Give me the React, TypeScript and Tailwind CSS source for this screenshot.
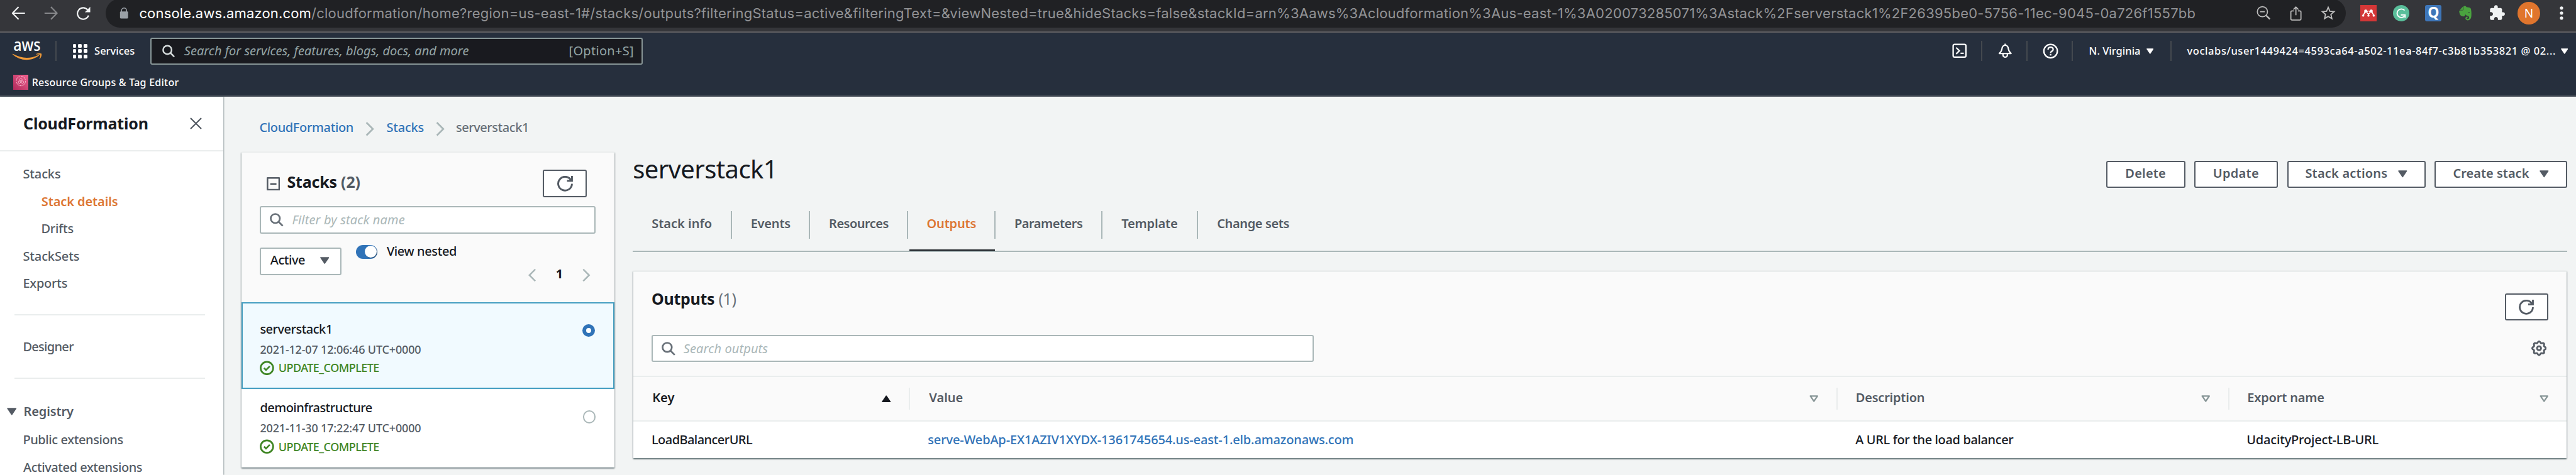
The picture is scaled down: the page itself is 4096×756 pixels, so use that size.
import React from "react";
import type { ReactNode } from "react";
import { FaEvernote } from "react-icons/fa";
import { MdExtension, MdStarBorder } from "react-icons/md";

const gearPath =
  Array.from({ length: 97 }, (_, i) => {
    const a = (i / 96) * Math.PI * 2;
    const r = 6.35 + 0.75 * Math.cos(8 * a);
    return `${i ? "L" : "M"}${(8 + r * Math.sin(a)).toFixed(2)} ${(8 - r * Math.cos(a)).toFixed(2)}`;
  }).join("") + "Z";

function SearchIcon({ className }: { className: string }) {
  return (
    <svg viewBox="0 0 16 16" fill="none" stroke="currentColor" strokeWidth="2" className={className}>
      <circle cx="6.5" cy="6.5" r="5.4" />
      <path d="M10.4 10.4 15.3 15.3" />
    </svg>
  );
}

function RefreshIcon({ className }: { className: string }) {
  return (
    <svg viewBox="0 0 16 16" fill="none" stroke="currentColor" strokeWidth="1.9" className={className}>
      <path d="M10 5h5V0" />
      <path d="M15 8a7 7 0 1 1-.8-3.4" />
    </svg>
  );
}

function Caret({ className, hollow, up }: { className: string; hollow?: boolean; up?: boolean }) {
  return (
    <svg viewBox="0 0 14 11" className={className} stroke="currentColor" strokeWidth={hollow ? 2.2 : 1.6} strokeLinejoin="round" fill={hollow ? "none" : "currentColor"}>
      <path d={up ? "M1 10h12L7 1.2z" : hollow ? "M1.6 1.2h10.8L7 9.2z" : "M1 1h12L7 9.8z"} />
    </svg>
  );
}

function Chevron({ className, left }: { className: string; left?: boolean }) {
  return (
    <svg viewBox="0 0 14 23" className={className} fill="none" stroke="currentColor" strokeWidth="2.8">
      <path d={left ? "M12.5 1 2 11.5 12.5 22" : "M1.5 1 12 11.5 1.5 22"} />
    </svg>
  );
}

function BrowserBar() {
  return (
    <div className="flex h-[51.5px] shrink-0 items-start border-b-2 border-[#5f5f62] bg-[#35363a] pl-[18px] text-[#f1f3f4]">
      <svg viewBox="66 36 84 82" className="mt-[9.6px] h-[22px] w-[22.5px]" fill="none" stroke="currentColor" strokeWidth="8">
        <path d="M147 77H74M109 40 73 77l36 36" strokeLinejoin="round" />
      </svg>
      <svg viewBox="258 36 84 82" className="mt-[9.6px] ml-[29px] h-[22px] w-[22.5px] text-[#87888b]" fill="none" stroke="currentColor" strokeWidth="8">
        <path d="M261 77h73M299 40l36 37-36 36" strokeLinejoin="round" />
      </svg>
      <svg viewBox="450 36 87 84" className="mt-[9.6px] ml-[28.6px] h-[22.5px] w-[23.3px]" fill="none" stroke="currentColor" strokeWidth="8">
        <path d="M524 91A34 34 0 1 1 518 57" />
        <path d="M534 39v32h-32z" fill="currentColor" stroke="none" />
      </svg>
      <div className="-mt-[2px] ml-[24px] flex h-[45.5px] w-[3562.5px] items-center rounded-[23px] bg-[#202124] pl-[21.8px]">
        <svg viewBox="705 46 54 68" className="h-[18.2px] w-[14.5px] text-[#9aa0a6]">
          <path d="M717 72v-8a15 15 0 0 1 30 0v8" fill="none" stroke="currentColor" strokeWidth="6" />
          <rect x="708" y="69" width="48" height="42" rx="5" fill="currentColor" />
        </svg>
        <div className="ml-[17.2px] font-['Inter',sans-serif] text-[22px] leading-[28px] whitespace-nowrap text-[#929396]">
          <span className="tracking-[0.18px] text-white">console.aws.amazon.com</span>
          <span className="tracking-[0.23px]">
            /cloudformation/home?region=us-east-1#/stacks/outputs?filteringStatus=active&amp;filteringText=&amp;viewNested=true&amp;hideStacks=false&amp;stackId=arn%3Aaws%3Acloudformation%3Aus-east-1%3A020073285071%3Astack%2Fserverstack1%2F26395be0-5756-11ec-9045-0a726f1557bb
          </span>
        </div>
        <div className="mr-[14px] ml-auto flex items-center text-[#bdbdbd]">
          <svg viewBox="635 35 85 85" className="h-[22.8px] w-[22.8px]" fill="none" stroke="currentColor" strokeWidth="6.5">
            <circle cx="670" cy="71" r="30" />
            <path d="M656 71h28" />
            <path d="M692 93l22 22" strokeWidth="9" />
          </svg>
          <svg viewBox="834 35 72 90" className="ml-[30px] h-[24.1px] w-[19.3px]" fill="none" stroke="currentColor" strokeWidth="6.5">
            <path d="M858 66H847q-7 0-7 7v40q0 7 7 7h46q7 0 7-7V73q0-7-7-7H882" />
            <path d="M870 92V43M855 58l15-15 15 15" />
          </svg>
          <MdStarBorder className="ml-[28px] h-[28px] w-[28px]" />
        </div>
      </div>
      <svg viewBox="0 0 96 96" className="mt-[8px] ml-[23px] h-[26px] w-[26px]">
        <rect width="96" height="96" fill="#d43737" />
        <g fill="#fff" stroke="#fff">
          <circle cx="32" cy="36" r="9" />
          <circle cx="64" cy="36" r="9" />
          <path d="M17 61 29 38M79 61 67 38M48 62V50" fill="none" strokeWidth="6" />
          <circle cx="48" cy="43" r="8" fill="#d43737" strokeWidth="4" />
          <circle cx="17" cy="62" r="6" />
          <circle cx="79" cy="62" r="6" />
          <circle cx="48" cy="62" r="6" />
        </g>
      </svg>
      <svg viewBox="0 0 96 96" className="mt-[8px] ml-[25.5px] h-[26px] w-[26px]" fill="none" stroke="#fff" strokeWidth="7">
        <circle cx="48" cy="48" r="48" fill="#5abf9b" stroke="none" />
        <path d="M68 32A25 25 0 1 0 67 66" />
        <path d="M46 58h25v17" />
      </svg>
      <div className="mt-[8px] ml-[25.5px] flex h-[26px] w-[26px] items-center justify-center rounded-[3px] bg-[#3e76b8] font-['Noto_Sans',sans-serif] text-[23px] leading-none font-bold text-white">
        <span className="-mt-[3px]">Q</span>
      </div>
      <FaEvernote className="mt-[8px] ml-[24px] h-[26px] w-[28px] text-[#4aa33f]" />
      <MdExtension className="mt-[7px] ml-[22.5px] h-[27px] w-[27px]" />
      <div className="mt-[3px] ml-[19px] flex h-[36px] w-[36px] items-center justify-center rounded-full bg-[#e0752d] font-['Noto_Sans',sans-serif] text-[19px] leading-none text-white">
        N
      </div>
      <svg viewBox="0 0 6 22" className="mt-[10px] ml-[30.7px] h-[22px] w-[6px] fill-current">
        <circle cx="3" cy="2.8" r="2.6" />
        <circle cx="3" cy="10.8" r="2.6" />
        <circle cx="3" cy="18.8" r="2.6" />
      </svg>
    </div>
  );
}

function HeaderCell({ children, className }: { children: ReactNode; className: string }) {
  return <div className={`flex h-[32px] items-center border-[#44494f] ${className}`}>{children}</div>;
}

function AwsHeader() {
  return (
    <header className="flex h-[102.9px] shrink-0 flex-col border-b-2 border-[#545b64] bg-[#262f3d] text-white">
      <div className="mt-[8px] flex h-[43.5px] shrink-0 items-center pl-[18.5px] text-[16.5px] font-medium whitespace-nowrap">
        <svg viewBox="66 240 180 118" className="h-[31.6px] w-[48.2px] overflow-visible">
          <text x="74" y="300" fill="#fff" fontSize="100" fontWeight="500" textLength="162" lengthAdjust="spacingAndGlyphs" fontFamily="Noto Sans, sans-serif">
            aws
          </text>
          <path d="M70 317q78 44 154 7l3 4q-34 25-74 25-48-1-83-32z" fill="#f19b38" />
          <path d="M209 318q20-8 32-2 5 12-9 32l-3-1q7-18 4-24-6-3-24-2z" fill="#f19b38" />
        </svg>
        <div className="ml-[21.3px] h-[32px] w-[2px] bg-[#44494f]" />
        <div className="ml-[25.6px] grid grid-cols-3 gap-[2.8px]">
          {Array.from({ length: 9 }, (_, i) => (
            <span key={i} className="h-[5.8px] w-[5.8px] rounded-[1.5px] bg-white" />
          ))}
        </div>
        <span className="ml-[11.5px]">Services</span>
        <div className="ml-[25px] flex h-[43.5px] w-[782.5px] items-center rounded-[3px] border-2 border-[#879596] bg-[#191a1f] pr-[12px] pl-[16.5px] text-[20px] font-normal text-[#95a5a6]">
          <SearchIcon className="h-[20.5px] w-[20px] text-[#d5dbdb]" />
          <span className="ml-[15px] italic">Search for services, features, blogs, docs, and more</span>
          <span className="ml-auto tracking-[0.3px]">[Option+S]</span>
        </div>
        <div className="ml-auto flex items-center">
          <HeaderCell className="w-[48.4px] border-r-2">
            <svg viewBox="58 76 88 88" className="ml-px h-[23.6px] w-[23.6px]" fill="none" stroke="#fff" strokeWidth="8.5">
              <rect x="64" y="82" width="76" height="76" rx="9" />
              <path d="M82 101l19 19-19 19M108 135h19" />
            </svg>
          </HeaderCell>
          <HeaderCell className="w-[72.2px] justify-center border-r-2 pl-[3px]">
            <svg viewBox="329 76 92 88" className="h-[23.6px] w-[24.7px]" fill="none" stroke="#fff" strokeWidth="8">
              <path d="M340 136h70q-14-12-16-28-3-21-19-21t-19 21q-2 16-16 28z" strokeLinejoin="round" />
              <path d="M375 78v9M362 139v7a13 12 0 0 0 26 0v-7" />
            </svg>
          </HeaderCell>
          <HeaderCell className="w-[72.2px] justify-center border-r-2 pl-[3px]">
            <svg viewBox="598 74 94 92" className="h-[24.7px] w-[25.2px]" fill="none" stroke="#fff" strokeWidth="8.5">
              <circle cx="645" cy="120" r="40" />
              <path d="M630 111q0-14 15-14t15 13q0 7-8 11-7 4-7 11" />
              <path d="M645 137v9" />
            </svg>
          </HeaderCell>
          <HeaderCell className="w-[156.4px] border-r-2 pl-[25.5px]">
            <span>N. Virginia</span>
            <Caret className="ml-[9.4px] h-[9px] w-[11.5px]" />
          </HeaderCell>
          <HeaderCell className="w-[643.5px] pl-[25px]">
            <span className="tracking-[0.57px]">voclabs/user1449424=4593ca64-a502-11ea-84f7-c3b81b353821 @ 02...</span>
            <Caret className="ml-[7.6px] h-[9px] w-[11.5px]" />
          </HeaderCell>
        </div>
      </div>
      <div className="mt-[15.5px] flex h-[24.5px] items-center pl-[20.7px] text-[16px] font-medium">
        <svg viewBox="0 0 90 90" className="h-[24.5px] w-[24.5px]" fill="none">
          <defs>
            <linearGradient id="rg" x1="0" y1="1" x2="1" y2="0">
              <stop offset="0" stopColor="#b0295a" />
              <stop offset="1" stopColor="#f0618f" />
            </linearGradient>
          </defs>
          <rect width="90" height="90" fill="url(#rg)" />
          <g stroke="#fbc4d6" strokeWidth="3">
            <circle cx="45" cy="36" r="27" strokeDasharray="36 6" />
            <circle cx="45" cy="29" r="7" />
            <circle cx="36" cy="43" r="7" />
            <circle cx="54" cy="43" r="7" />
            <circle cx="45" cy="63" r="3" />
          </g>
        </svg>
        <span className="ml-[5.5px] tracking-[0.24px]">Resource Groups &amp; Tag Editor</span>
      </div>
    </header>
  );
}

function Sidebar() {
  return (
    <aside className="z-10 flex w-[355.4px] shrink-0 flex-col bg-white font-medium text-[#545b64] shadow-[1px_0_2px_rgba(0,28,36,0.35)]">
      <div className="flex h-[87px] shrink-0 items-center justify-between border-b-2 border-[#eaeded] pr-[34px] pl-[37px]">
        <span className="text-[25px] font-bold tracking-[-0.17px] text-[#16191f]">CloudFormation</span>
        <svg viewBox="0 0 19 19" className="h-[19px] w-[19px]" fill="none" stroke="currentColor" strokeWidth="2.2">
          <path d="M1 1l17 17M18 1 1 18" />
        </svg>
      </div>
      <nav className="flex flex-col pt-[13.8px] text-[20px] leading-[43.5px] tracking-[-0.25px] whitespace-nowrap">
        <span className="pl-[36.4px] tracking-[-0.12px]">Stacks</span>
        <span className="pl-[65.8px] font-semibold tracking-[-0.1px] text-[#dd7734]">Stack details</span>
        <span className="pl-[65.4px]">Drifts</span>
        <span className="pl-[36.4px] tracking-[-0.12px]">StackSets</span>
        <span className="pl-[36.4px]">Exports</span>
        <div className="mt-[27.6px] mr-[29px] ml-[22.6px] h-[2px] bg-[#eaeded]" />
        <span className="mt-[27.5px] pl-[36.4px] tracking-[-0.7px]">Designer</span>
        <div className="mt-[27.5px] mr-[29px] ml-[22.6px] h-[2px] bg-[#eaeded]" />
        <span className="mt-[30px] flex items-center pl-[11px] font-semibold tracking-[-0.14px]">
          <Caret className="mt-[1px] h-[12px] w-[15.5px]" />
          <span className="ml-[11px]">Registry</span>
        </span>
        <span className="mt-[1.8px] pl-[36.4px] tracking-[-0.4px]">Public extensions</span>
        <span className="pl-[37px] tracking-[-0.44px]">Activated extensions</span>
      </nav>
    </aside>
  );
}

function StackRow({ name, date, selected }: { name: string; date: string; selected?: boolean }) {
  return (
    <div
      className={
        selected
          ? "flex h-[138.4px] shrink-0 border-2 border-[#459ec1] bg-[#f1faff] pt-[23.7px] pr-[29px] pl-[27.4px]"
          : "flex h-[124px] shrink-0 pt-[12.7px] pr-[29.6px] pl-[29.4px]"
      }
    >
      <div className="flex flex-col whitespace-nowrap">
        <span className="text-[20px] leading-[33px] tracking-[-0.51px] text-[#16191f]">{name}</span>
        <span className="text-[18px] leading-[33px] tracking-[-0.17px] text-[#545b64]">{date}</span>
        <span className="flex h-[26px] items-center text-[18px] tracking-[-0.53px] text-[#3f8624]">
          <svg viewBox="0 0 16 16" className="h-[23.5px] w-[22.8px]" fill="none" stroke="currentColor" strokeWidth="1.9">
            <circle cx="8" cy="8" r="7" />
            <path d="M4.8 8l2.2 2.2 4.2-4.2" />
          </svg>
          <span className="ml-[6.6px]">UPDATE_COMPLETE</span>
        </span>
      </div>
      {selected ? (
        <span className="mt-[9.5px] ml-auto h-[19.6px] w-[19.6px] rounded-full border-[6px] border-[#3073b8] bg-white" />
      ) : (
        <span className="mt-[21px] ml-auto h-[20.5px] w-[20px] rounded-full border-2 border-[#aab7b8] bg-white" />
      )}
    </div>
  );
}

function StacksPanel() {
  return (
    <section className="ml-[28.6px] flex h-[501.3px] w-[592.6px] shrink-0 flex-col bg-white font-medium shadow-[0_2px_2px_rgba(0,28,36,0.35),1px_1px_2px_rgba(0,28,36,0.2),-1px_1px_2px_rgba(0,28,36,0.2)]">
      <div className="h-[238.6px] shrink-0 border-t border-[#eaeded] bg-[#fafafa] pt-[27px] pr-[29.6px] pl-[29.4px]">
        <div className="flex h-[43.6px] items-center pr-[14.3px] pl-[10.6px]">
          <svg viewBox="0 0 16 16" className="h-[21.3px] w-[21.3px] text-[#545b64]" fill="none" stroke="currentColor" strokeWidth="1.9">
            <path d="M1 1h14v14H1zM4.3 8h7.4" strokeLinejoin="round" />
          </svg>
          <h2 className="-mt-[4px] ml-[11.2px] text-[25px] font-bold tracking-[-0.2px] text-[#16191f]">
            Stacks <span className="text-[#545b64]">(2)</span>
          </h2>
          <button className="ml-auto flex h-[43.6px] w-[69.3px] items-center justify-center rounded-[3px] border-2 border-[#545b64] bg-white text-[#545b64]">
            <RefreshIcon className="h-[25px] w-[25px]" />
          </button>
        </div>
        <div className="mt-[14.4px] flex h-[43.6px] items-center rounded-[3px] border-2 border-[#aab7b8] bg-white pl-[14px] text-[20px] font-normal text-[#aab7b8] italic">
          <SearchIcon className="h-[21.5px] w-[21.5px] text-[#687078]" />
          <span className="ml-[13.5px] tracking-[0.14px]">Filter by stack name</span>
        </div>
        <div className="mt-[17.7px] flex items-start text-[20px] text-[#16191f]">
          <button className="mt-[4.6px] flex h-[43.5px] w-[130px] items-center rounded-[3px] border-2 border-[#aab7b8] bg-white pl-[14.4px] text-[#16191f]">
            <span className="-mt-[4px] tracking-[-0.46px]">Active</span>
            <Caret className="-mt-[2px] ml-[23.5px] h-[11.4px] w-[14.5px] text-[#545b64]" />
          </button>
          <span className="ml-[22.6px] flex h-[22.3px] w-[34px] items-center justify-end rounded-full bg-[#3073b8] pr-[1.2px]">
            <span className="h-[19px] w-[19px] rounded-full bg-white shadow-[1px_1px_1px_rgba(0,0,0,0.35)]" />
          </span>
          <span className="ml-[15px] leading-[20px] tracking-[-0.4px]">View nested</span>
          <div className="mt-[37px] mr-[8px] ml-auto flex h-[22px] items-center text-[#aab7b8]">
            <Chevron left className="h-[22px] w-[12.5px]" />
            <span className="-mt-[3px] ml-[31.3px] font-bold text-[#16191f]">1</span>
            <Chevron className="ml-[31.3px] h-[22px] w-[12.5px]" />
          </div>
        </div>
      </div>
      <StackRow selected name="serverstack1" date="2021-12-07 12:06:46 UTC+0000" />
      <StackRow name="demoinfrastructure" date="2021-11-30 17:22:47 UTC+0000" />
    </section>
  );
}

const tabs: { label: string; box: string; text: string }[] = [
  { label: "Stack info", box: "w-[158px] border-r-2", text: "" },
  { label: "Events", box: "w-[124.3px] border-r-2", text: "tracking-[-0.2px]" },
  { label: "Resources", box: "w-[156px] border-r-2", text: "tracking-[-0.5px]" },
  { label: "Outputs", box: "w-[138.7px] border-r-2", text: "tracking-[-0.2px] text-[#dd7734]" },
  { label: "Parameters", box: "w-[170px] border-r-2", text: "tracking-[-0.49px]" },
  { label: "Template", box: "w-[151.5px] border-r-2", text: "tracking-[-0.13px]" },
  { label: "Change sets", box: "w-[176px]", text: "tracking-[-0.37px]" },
];

function ActionButton({ label, caret, className }: { label: string; caret?: boolean; className: string }) {
  return (
    <button className={`flex h-[43.7px] items-center justify-center rounded-[3px] border-2 border-[#545b64] bg-white text-[20px] font-semibold text-[#545b64] ${className}`}>
      <span className="-mt-[3px]">{label}</span>
      {caret && <Caret className="-mt-[1px] ml-[17px] h-[11.6px] w-[14.6px]" />}
    </button>
  );
}

const columns: { label: string; box: string; text: string }[] = [
  { label: "Key", box: "pl-[30px]", text: "text-[#16191f]" },
  { label: "Value", box: "pl-[30.5px]", text: "" },
  { label: "Description", box: "pl-[29px]", text: "tracking-[-0.22px]" },
  { label: "Export name", box: "pl-[28.5px]", text: "tracking-[-0.19px]" },
];

function OutputsTable() {
  return (
    <section className="mt-[30.5px] ml-px h-[298px] w-[3073.8px] shrink-0 bg-[#fafafa] shadow-[0_2px_2px_rgba(0,28,36,0.4),1px_1px_2px_rgba(0,28,36,0.2),-1px_1px_2px_rgba(0,28,36,0.2)]">
      <div className="h-[169px] border-t-2 border-b-2 border-[#eaeded] pr-[29px] pl-[28.8px]">
        <div className="flex h-[80px] items-start">
          <h2 className="mt-[28.5px] text-[25px] leading-[26px] font-bold tracking-[-0.3px] text-[#16191f]">
            Outputs <span className="font-normal text-[#687078]">(1)</span>
          </h2>
          <button className="mt-[33.5px] ml-auto flex h-[43.5px] w-[69px] items-center justify-center rounded-[3px] border-2 border-[#545b64] bg-white text-[#545b64]">
            <RefreshIcon className="h-[24px] w-[24px]" />
          </button>
        </div>
        <div className="mt-[19.5px] flex h-[43.5px] items-center">
          <div className="flex h-[43.5px] w-[1053.3px] items-center rounded-[3px] border-2 border-[#aab7b8] bg-white pl-[14px] text-[20px] text-[#aab7b8] italic">
            <SearchIcon className="h-[21.8px] w-[21.8px] text-[#687078]" />
            <span className="ml-[13px] tracking-[0.11px]">Search outputs</span>
          </div>
          <svg viewBox="0 0 16 16" className="mr-[2.5px] ml-auto h-[24.5px] w-[24.5px] text-[#545b64]" fill="none" stroke="currentColor" strokeWidth="1.8">
            <path d={gearPath} strokeLinejoin="round" />
            <circle cx="8" cy="8" r="2.1" />
          </svg>
        </div>
      </div>
      <div className="grid h-[70.5px] grid-cols-[439.6px_1475px_623px_536.2px] items-center border-b-2 border-[#eaeded] text-[20px] font-semibold text-[#545b64]">
        {columns.map((c, i) => (
          <div key={c.label} className={`flex h-[35.5px] items-center pr-[28.2px] ${i < 3 ? "border-r-2 border-[#eaeded]" : ""} ${c.box}`}>
            <span className={`-mt-[4px] ${c.text}`}>{c.label}</span>
            <Caret up={i === 0} hollow={i > 0} className={`ml-auto h-[11.5px] w-[14.5px] ${i === 0 ? "text-[#16191f]" : "text-[#879596]"}`} />
          </div>
        ))}
      </div>
      <div className="grid h-[58.5px] grid-cols-[439.6px_1475px_623px_536.2px] items-center bg-white text-[20px] leading-[56px] font-medium whitespace-nowrap text-[#16191f]">
        <span className="pl-[28.8px] tracking-[-0.56px]">LoadBalancerURL</span>
        <span className="pl-[28.5px] tracking-[-0.14px] text-[#3073b8]">serve-WebAp-EX1AZIV1XYDX-1361745654.us-east-1.elb.amazonaws.com</span>
        <span className="pl-[28.5px] tracking-[-0.37px]">A URL for the load balancer</span>
        <span className="pl-[27.5px] tracking-[-0.18px]">UdacityProject-LB-URL</span>
      </div>
    </section>
  );
}

function StackDetails() {
  return (
    <section className="ml-[29.6px] flex w-[3076px] shrink-0 flex-col">
      <div className="flex items-start pt-[13.2px]">
        <h1 className="mt-[-1.4px] text-[40px] leading-[30px] tracking-[-0.6px] text-[#16191f]">serverstack1</h1>
        <div className="ml-auto flex">
          <ActionButton label="Delete" className="w-[125.9px] tracking-[0.18px]" />
          <ActionButton label="Update" className="ml-[13.9px] w-[133.8px] tracking-[0.28px]" />
          <ActionButton label="Stack actions" caret className="ml-[14.4px] w-[220px] tracking-[0.21px]" />
          <ActionButton label="Create stack" caret className="ml-[14.6px] w-[210.9px]" />
        </div>
      </div>
      <div className="mt-[36.9px] flex h-[64.8px] border-b-2 border-[#aab7b8]">
        {tabs.map((t) => (
          <div key={t.label} className="relative">
            <div className={`flex h-[43.5px] items-center justify-center border-[#aab7b8] text-[20px] font-semibold text-[#545b64] ${t.box}`}>
              <span className={`-mt-[4px] ${t.text}`}>{t.label}</span>
            </div>
            {t.label === "Outputs" && <span className="absolute bottom-0 left-[2px] h-[2px] w-[135.5px] bg-[#16191f]" />}
          </div>
        ))}
      </div>
      <OutputsTable />
    </section>
  );
}

export default function App() {
  return (
    <div className="flex h-[756px] w-[4096px] flex-col overflow-hidden bg-[#f2f4f4] font-['Noto_Sans','Open_Sans',sans-serif]">
      <BrowserBar />
      <AwsHeader />
      <div className="flex min-h-0 flex-1">
        <Sidebar />
        <main className="flex flex-1 flex-col">
          <div className="flex h-[88px] shrink-0 items-center pt-[10px] pl-[57px] text-[20px] font-medium tracking-[-0.36px] text-[#3073b8]">
            <span>CloudFormation</span>
            <Chevron className="mt-[4px] ml-[19px] h-[22.4px] w-[14px] text-[#aab7b8]" />
            <span className="ml-[19.4px] tracking-[-0.2px]">Stacks</span>
            <Chevron className="mt-[4px] ml-[19px] h-[22.4px] w-[14px] text-[#aab7b8]" />
            <span className="ml-[17.8px] tracking-[-0.45px] text-[#687078]">serverstack1</span>
          </div>
          <div className="flex items-start">
            <StacksPanel />
            <StackDetails />
          </div>
        </main>
      </div>
    </div>
  );
}
